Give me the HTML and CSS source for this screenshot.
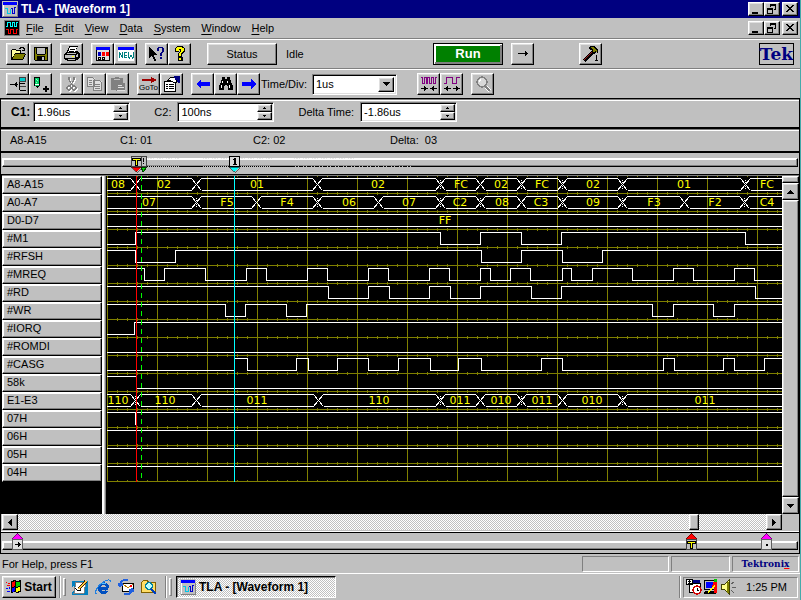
FILE: index.html
```
<!DOCTYPE html>
<html lang="en">
<head>
<meta charset="utf-8">
<title>TLA - [Waveform 1]</title>
<link rel="stylesheet" href="styles.css">
</head>
<body>
<svg class="defs" width="0" height="0" aria-hidden="true">
  <symbol id="app" viewBox="0 0 16 16"><path fill="#c0c0c0" d="M0 0h16v16H0z"/><path fill="#00f" d="M1 1h14v3H1z"/><path fill="#fff" d="M1 4h1v11H1z"/><path fill="#808080" d="M15 4h1v12H1v-1h14z"/><path fill="none" stroke="#00c8e8" stroke-width="1" d="M3 7.500h2.500v5h3v-5"/><path fill="none" stroke="#0000d0" d="M9 7.500h1.500v5h2v-6H14"/></symbol>
  <symbol id="min" viewBox="0 0 14 12"><path d="M3 9h6v2H3z"/></symbol>
  <symbol id="restore" viewBox="0 0 14 12"><path fill="none" stroke="#000" d="M5.500 4V1.500h5v5H9M5 2.500h6M2.500 5.500h5v5h-5zM2 6.500h6"/></symbol>
  <symbol id="close" viewBox="0 0 14 12"><path d="M3 2h2v1h1v1h2V3h1V2h2v1h-1v1H9v1H8v1h1v1h1v1h1v1H9V8H8V7H6v1H5v1H3V8h1V7h1V6h1V5H5V4H4V3H3z"/></symbol>
  <symbol id="tri-up" viewBox="0 0 7 4"><path d="M3 0h1v1h1v1h1v1h1v1H0V3h1V2h1V1h1z"/></symbol>
  <symbol id="tri-down" viewBox="0 0 7 4"><path d="M0 0h7v1H6v1H5v1H4v1H3V3H2V2H1V1H0z"/></symbol>
  <symbol id="tri-left" viewBox="0 0 4 7"><path d="M3 0h1v7H3V6H2V5H1V4H0V3h1V2h1V1h1z"/></symbol>
  <symbol id="tri-right" viewBox="0 0 4 7"><path d="M0 0h1v1h1v1h1v1h1v1H3v1H2v1H1v1H0z"/></symbol>
  <symbol id="spin-up" viewBox="0 0 3 2"><path d="M1 0h1v1h1v1H0V1h1z"/></symbol>
  <symbol id="spin-down" viewBox="0 0 3 2"><path d="M0 0h3v1H2v1H1V1H0z"/></symbol>
</svg>

<div class="screen">
<header class="titlebar">
  <svg class="i16"><use href="#app"/></svg>
  <h1>TLA - [Waveform 1]</h1>
  <div class="winbtns">
    <button class="bevel" aria-label="Minimize"><svg><use href="#min"/></svg></button>
    <button class="bevel" aria-label="Restore"><svg><use href="#restore"/></svg></button>
    <button class="bevel apart" aria-label="Close"><svg><use href="#close"/></svg></button>
  </div>
</header>

<nav class="menubar">
  <svg class="i16" viewBox="0 0 16 16"><path d="M0 0h16v16H0z"/><path fill="none" stroke="#808080" d="M.5.500h15v15H.5z"/><path fill="none" stroke="#0ff" d="M2 6.500h1.500v-4h3v4h2v-4h2v4h2v-4H14"/><path fill="none" stroke="#f00" d="M2 9.500h2.500v4h2v-4h3v4h3v-4H14"/></svg>
  <button><u>F</u>ile</button><button><u>E</u>dit</button><button><u>V</u>iew</button><button><u>D</u>ata</button><button><u>S</u>ystem</button><button><u>W</u>indow</button><button><u>H</u>elp</button>
  <div class="winbtns">
    <button class="bevel" aria-label="Minimize document"><svg><use href="#min"/></svg></button>
    <button class="bevel" aria-label="Restore document"><svg><use href="#restore"/></svg></button>
    <button class="bevel apart" aria-label="Close document"><svg><use href="#close"/></svg></button>
  </div>
</nav>

<div class="toolbar">
  <div class="group">
    <button class="tool bevel" aria-label="Open"><svg viewBox="0 0 16 16"><path d="M1 4h1V3h4v1h5v3h4v1h1v1h-1v2h-1v2h-1v1H1z"/><path fill="#ffffa0" d="M2 4h4v1h4v2H5v1H4v2H3v1H2z"/><path fill="#808000" d="M5 8h10v1h-1v2h-1v2H3v-2h1V9h1z"/><path fill="none" stroke="#000" d="M9 2.500h1v-1h3v1h1v2M12 4.500h3"/></svg></button>
    <button class="tool bevel" aria-label="Save"><svg viewBox="0 0 16 16"><path d="M1 1h14v14H2v-1H1z"/><path fill="#808000" d="M2 2h1v6h1v1h8V8h1V3h1v11H2z"/><path fill="#c0c0c0" d="M4 2h8v6H4z"/><path d="M4 10h8v4H4z"/><path fill="#c0c0c0" d="M9 11h2v3H9z"/></svg></button>
  </div>
  <div class="group">
    <button class="tool bevel" aria-label="Print"><svg viewBox="0 0 16 16"><path d="M5 0h9v1h-1v2h-1v2h2v1h1v1h1v5h-1v1h-1v1h-2v1H3v-1H1v-1H0V8h1V7h1V6h1V4h1V2h1z"/><path fill="#fff" d="M6 1h7l-2 5H4z"/><path fill="#c0c0c0" d="M3 7h9l-1 1H2zM1 9h10v3H1zM12 9h1v-1h1v3h-2zM4 13h7v1H4z"/><path d="M6 2.500h5v1H6zM5 4.500h5v1H5z"/><path fill="#ff0" d="M8 10h2v1H8z"/></svg></button>
  </div>
  <div class="group">
    <button class="tool bevel" aria-label="System window"><svg viewBox="0 0 16 16"><path d="M1 1h14v14H1z"/><path fill="#e0e0e0" d="M2 4h12v10H2z"/><path fill="#00f" d="M1 1h14v3H1z"/><path fill="#0000c0" d="M3 6h3v4H3z"/><path fill="#f00" d="M7 6h3v4H7zM11 6h3v4h-3z"/><path fill="none" stroke="#000" d="M3.500 11.500h2v2h-2zM7.500 11.500h2v2h-2z"/></svg></button>
    <button class="tool bevel" aria-label="New data window"><svg viewBox="0 0 16 16"><path fill="#fff" d="M0 1h16v14H0z"/><path fill="#00f" d="M0 1h16v3H0z"/><path fill="none" stroke="#008080" d="M1.500 12V6.500l3 5V6M9 6.500H6.500v5H9M6.500 9H9M10.500 6v5l1 1 1.500-3 1.500 3 1-1V6"/></svg></button>
  </div>
  <div class="group">
    <button class="tool bevel" aria-label="Context help"><svg viewBox="0 0 16 16"><path d="M0 1h1v1h1v1h1v1h1v1h1v1h1v1h1v1h1v1H5v2h1v2h1v2H5v-2H4v-2H3v-1H2v1H1v1H0z"/><path fill="#000080" d="M9 1h5v1h1v4h-1v1h-1v3h-2V7h1V6h1V2h-3v3H8V2h1zM11 11h2v2h-2z"/></svg></button>
    <button class="tool bevel" aria-label="Help topics"><svg viewBox="0 0 16 16"><path d="M5 0h6v1h1v1h1v4h-1v1h-1v1h-1v3H6V7h1V6h1V4H7v2H3V2h1V1h1zM6 11h5v4H6z"/><path fill="#ff0" d="M5 1h5v1h2v3h-1v1h-1v1H9v3H7V7h1V6h1V3H7v2H4V2h1zM7 12h2v2H7z"/></svg></button>
  </div>
  <button class="bevel status-btn">Status</button>
  <span class="idle">Idle</span>
  <button class="bevel run">Run</button>
  <button class="tool bevel step" aria-label="Single step"><svg viewBox="0 0 16 16"><path d="M3 7h7V5h1v1h1v1h1v1h-1v1h-1v1h-1V8H3z"/></svg></button>
  <button class="tool bevel hammer" aria-label="Tools"><svg viewBox="0 0 16 16"><path stroke="#000" stroke-width="3" d="M1 15l9-9"/><path stroke="#a02020" stroke-width="1.200" d="M1 14l8-8"/><path d="M5 2l2-2h5l3 4v3h-1l-1-1-1 2-2-1-1-3H8z"/><path fill="#808000" d="M7 1h4l3 4-1 1-1-1-1 2-1-1V3z"/><path d="M13 9h1v5h1v1h-3v-1h1v-4h-1z"/></svg></button>
  <span class="tek">Tek</span>
</div>

<div class="toolbar second">
  <div class="group">
    <button class="tool bevel" aria-label="Add channel"><svg viewBox="0 0 16 16"><path fill="none" stroke="#000" d="M0 8.500h8M6.500 6v5M5.500 7v3M9.500 3v11M10 7.500h5M10 14.500h6"/><path fill="#0cc" d="M10 2h6v3h-6z"/><path fill="none" stroke="#404040" d="M9.500 1.500h6v4h-6zM9.500 10.500h6"/></svg></button>
    <button class="tool bevel" aria-label="Add mark"><svg viewBox="0 0 16 16"><path d="M1 1h6v9H6v1H5v1H4v-1H3v-1H1z"/><path fill="#0c6" d="M2 2h4v8H2z"/><path fill="#80ffc0" d="M3 3h1v1H3zM4 4h1v1H4zM3 6h1v1H3z"/><path fill="#fff" d="M2 8h4v1H2z"/><path d="M12 10h2v2h2v2h-2v2h-2v-2h-2v-2h2z"/></svg></button>
  </div>
  <div class="group">
    <button class="tool bevel" aria-label="Cut" disabled><svg viewBox="0 0 16 16"><g fill="none" stroke="#fff" stroke-width="1.300" transform="translate(1 1)"><path d="M5 1v3l4 6M10 1v3l-4 6"/><circle cx="5" cy="12" r="2"/><circle cx="10" cy="12" r="2"/></g><g fill="none" stroke="#808080" stroke-width="1.300"><path d="M5 1v3l4 6M10 1v3l-4 6"/><circle cx="5" cy="12" r="2"/><circle cx="10" cy="12" r="2"/></g></svg></button>
    <button class="tool bevel" aria-label="Copy" disabled><svg viewBox="0 0 16 16"><path fill="#e0e0e0" d="M1 2h7v9H1zM7 5h8v10H7z"/><path fill="none" stroke="#808080" d="M.5 1.500h5l2 2v7h-7zM2 4.500h3M2 6.500h3M2 8.500h3M6.500 4.500h6l2 2v8h-8zM8 8.500h5M8 10.500h5M8 12.500h5"/></svg></button>
    <button class="tool bevel" aria-label="Paste" disabled><svg viewBox="0 0 16 16"><path fill="#808080" d="M1 2h4V1h4v1h4v5h2v8H6v-1H1z"/><path fill="#c0c0c0" d="M4 3h6v1H4z"/><path fill="#e0e0e0" d="M8 9h4v1H8zM8 11h6v1H8zM7 14h8v1H7z"/></svg></button>
  </div>
  <div class="group">
    <button class="tool bevel goto" aria-label="Go to"><svg viewBox="0 0 16 8"><path fill="#a00000" d="M1 3h9V1h1v1h2v1h2v2h-2v1h-2v1h-1V5H1z"/></svg><span>GoTo</span></button>
    <button class="tool bevel" aria-label="Properties"><svg viewBox="0 0 16 16"><path d="M0 5h12v11H0z"/><path fill="#fff" d="M1 6h10v9H1z"/><path fill="none" stroke="#000" d="M2 8.500h2M5 8.500h5M2 10.500h2M5 10.500h5M2 12.500h2M5 12.500h5"/><path fill="#fff" stroke="#000" d="M4 4l2-2 5-1 2 5-3 1-4-3z"/><path fill="#000080" d="M10 0h6v7h-2V6h-1V4h-2V2h-1z"/></svg></button>
  </div>
  <div class="group">
    <button class="tool bevel" aria-label="Search back"><svg viewBox="0 0 16 16"><path fill="#00f" d="M1 8l5-5v3h9v4H6v3z"/></svg></button>
    <button class="tool bevel" aria-label="Find"><svg viewBox="0 0 16 16"><path d="M4 1h3v2h2V1h3v3h1v3h1v2h1v5h-5v-4H9V9H7v1H6v4H1V9h1V7h1V4h1z"/><path fill="#fff" d="M4 5h1v2H4zM3 9h1v3H3zM9 5h1v2H9zM11 9h1v3h-1z"/></svg></button>
    <button class="tool bevel" aria-label="Search forward"><svg viewBox="0 0 16 16"><path fill="#00f" d="M15 8l-5-5v3H1v4h9v3z"/></svg></button>
  </div>
  <label class="timediv" for="timediv">Time/Div:</label>
  <span class="combo sunken"><select id="timediv"><option>1us</option></select><span class="drop bevel"><svg width="7" height="4"><use href="#tri-down"/></svg></span></span>
  <div class="group zoomers">
    <button class="tool bevel" aria-label="Zoom out"><svg viewBox="0 0 16 16"><path fill="none" stroke="#800080" d="M0 1.500h1.500v6h2v-6h2v6h1v-6h2v6h2v-6h2v6h2v-6H16"/><path d="M0 12h3v-2h1v1h1v1h2v1H5v1H4v1H3v-2H0zM16 12h-3v-2h-1v1h-1v1H9v1h2v1h1v1h1v-2h3z"/></svg></button>
    <button class="tool bevel" aria-label="Zoom in"><svg viewBox="0 0 16 16"><path fill="none" stroke="#800080" d="M0 7.500h2.500v-6h6v6h4v-6H16"/><path d="M7 12H4v-2H3v1H2v1H0v1h2v1h1v1h1v-2h3zM9 12h3v-2h1v1h1v1h2v1h-2v1h-1v1h-1v-2H9z"/></svg></button>
  </div>
  <button class="tool bevel" aria-label="Magnify" disabled><svg viewBox="0 0 16 16"><circle cx="7" cy="6" r="5" fill="#d8d8d8" stroke="#808080" stroke-width="1.500"/><path stroke="#fff" stroke-width="3" d="M11 11l4 4"/><path stroke="#808080" stroke-width="2" d="M10 10l5 5"/><path fill="none" stroke="#fff" d="M4 6l2-3"/></svg></button>
</div>

<main class="document">
  <form class="cursorbar">
    <label class="strong" for="c1">C1:</label>
    <span class="spin sunken"><input id="c1" value="1.96us"><span class="arrows"><button type="button" class="bevel" aria-label="C1 up"><svg><use href="#spin-up"/></svg></button><button type="button" class="bevel" aria-label="C1 down"><svg><use href="#spin-down"/></svg></button></span></span>
    <label for="c2">C2:</label>
    <span class="spin sunken"><input id="c2" value="100ns"><span class="arrows"><button type="button" class="bevel" aria-label="C2 up"><svg><use href="#spin-up"/></svg></button><button type="button" class="bevel" aria-label="C2 down"><svg><use href="#spin-down"/></svg></button></span></span>
    <label for="dt">Delta Time:</label>
    <span class="spin sunken"><input id="dt" value="-1.86us"><span class="arrows"><button type="button" class="bevel" aria-label="Delta up"><svg><use href="#spin-up"/></svg></button><button type="button" class="bevel" aria-label="Delta down"><svg><use href="#spin-down"/></svg></button></span></span>
  </form>
  <div class="readout"><span>A8-A15</span><span>C1: 01</span><span>C2: 02</span><span>Delta:&nbsp; 03</span></div>
  <div class="ruler">
    <div class="groove"></div>
    <svg class="marks" width="420" height="20"><path stroke="#e8e8e8" stroke-dasharray="1 1 2 1 1 3" d="M148 5.500h32M203 5.500h70M294 5.500h62"/><path stroke="#909090" d="M148 12.500h250"/><path stroke="#c0c0c0" stroke-dasharray="1 1" d="M148 13.500h32M203 13.500h68"/><path stroke="#c0c0c0" stroke-dasharray="1 2 1 4" d="M295 13.500h120"/>
      <path fill="#c0c0c0" stroke="#404040" d="M139.500 3.500h7v10h-7z"/><path fill="#00e000" stroke="#004000" d="M141 14h6l-4 5z"/><path d="M143 5h1v4h-1zM143 10h1v1h-1z"/>
      <path fill="#c0c0c0" stroke="#404040" d="M131.500 3.500h10v10h-10z"/><path fill="none" stroke="#000" stroke-width="3" d="M132 6.500h9M136.500 6v7"/><path fill="none" stroke="#ff0" d="M133 6.500h7M136.500 6v6"/><path fill="#f00" stroke="#000" stroke-width=".5" d="M131 14h11l-5.500 5z"/>
      <path fill="#d8d8d8" stroke="#000" d="M229.500 3.500h10v10h-10z"/><path d="M234 5h2v6h1v1h-4v-1h1V7h-1V6h1z"/><path fill="#0ff" stroke="#000" stroke-width=".5" d="M229 14h11l-5.500 5z"/></svg>
  </div>
  <div class="view">
    <ul class="signals" id="signals"></ul>
    <div class="splitter"></div>
    <div class="plot"><svg id="plot" width="100%" height="306" role="img" aria-label="Waveforms"></svg></div>
    <div class="vscroll">
      <span class="bevel splitbox"></span>
      <button class="bevel" aria-label="Scroll up"><svg width="7" height="4"><use href="#tri-up"/></svg></button>
      <span class="bevel thumb"></span>
      <button class="bevel" aria-label="Scroll down"><svg width="7" height="4"><use href="#tri-down"/></svg></button>
    </div>
  </div>
  <div class="hscroll">
    <button class="bevel" aria-label="Scroll left"><svg width="4" height="7"><use href="#tri-left"/></svg></button>
    <span class="track before"></span><span class="bevel thumb"></span><span class="track after"></span>
    <button class="bevel" aria-label="Scroll right"><svg width="4" height="7"><use href="#tri-right"/></svg></button>
    <span class="corner"></span>
  </div>
  <div class="overview">
    <div class="groove"></div>
    <svg class="pin start" viewBox="0 0 12 18"><path fill="#f0f" stroke="#000" stroke-width=".5" d="M0 6h11L5.500 0z"/><path fill="#e0e0e0" stroke="#606060" d="M.5 6.500h10v10H.5z"/><path d="M3 11h3V9h1v1h1v1h1v1H8v1H7v1H6v-2H3z"/></svg>
    <svg class="pin trigger" viewBox="0 0 12 18"><path fill="#f00" stroke="#000" stroke-width=".5" d="M0 6h11L5.500 0z"/><path fill="#c0c0c0" stroke="#404040" d="M.5 6.500h10v10H.5z"/><path fill="none" stroke="#000" stroke-width="3" d="M1 9.500h9M5.500 9v7"/><path fill="none" stroke="#ff0" d="M2 9.500h7M5.500 9v6"/></svg>
    <svg class="pin end" viewBox="0 0 12 18"><path fill="#f0f" stroke="#000" stroke-width=".5" d="M0 6h11L5.500 0z"/><path fill="#e0e0e0" stroke="#606060" d="M.5 6.500h10v10H.5z"/><path d="M5 11h2v2H5z"/></svg>
  </div>
</main>

<footer class="statusbar"><span class="msg">For Help, press F1</span><span class="pane wide"></span><span class="pane"></span><span class="pane brand">Tektroni<i>x</i></span></footer>

<div class="taskbar">
  <button class="bevel start-btn"><svg class="i16" viewBox="0 0 16 16"><path d="M5 2l3-1 3 1 4-1v12l-4 1-3-1-3 1z"/><path fill="#f00" d="M6 3l3-1v5L6 8zM0 3h1v1H0zM2 4h2v1H2zM1 6h3v1H1z"/><path fill="#0c0" d="M10 3h4v4l-4 1z"/><path fill="#00f" d="M6 9l3-1v4l-3 1zM0 9h2v1H0zM3 8h1v2H3zM1 12h3v1H1z"/><path fill="#ff0" d="M10 9l4-1v4l-4 1z"/></svg>Start</button>
  <span class="sep"></span><span class="grip"></span>
  <div class="quick">
    <button aria-label="Show desktop"><svg class="i16" viewBox="0 0 16 16"><path fill="#0080c0" d="M0 2h16v14H0z"/><path fill="#fff" stroke="#808080" d="M4 3h10l-2 11H2z"/><path fill="none" stroke="#000" d="M3 9l3 3 3-1"/><path stroke="#402000" stroke-width="3" d="M7 10l7-8"/><path stroke="#fc4" stroke-width="1.500" d="M7 10l7-8"/><path fill="#c0c0c0" d="M6 0h4v2H6zM0 8l2-2v5l-2 2z"/></svg></button>
    <button aria-label="Internet Explorer"><svg class="i16" viewBox="0 0 16 16"><path fill="none" stroke="#0050c0" stroke-width="3" d="M13 9H4.500M13 9a4.500 4.500 0 1 0-1 3"/><path fill="none" stroke="#50c0ff" d="M4 7a4.500 4.500 0 0 1 7-2"/><path fill="none" stroke="#2080e0" d="M2 14C-1 17 0 9 7 4s9-3 8-1"/></svg></button>
    <button aria-label="Outlook Express"><svg class="i16" viewBox="0 0 16 16"><path fill="#fff" stroke="#000" d="M4.500 4.500h11v8h-11z"/><path fill="none" stroke="#c08000" d="M5 5l5 4 5-4"/><path fill="none" stroke="#2060e0" stroke-width="2" d="M10 1C5 0 3 2 2 6M0 4l2 3 3-2M6 15c5 1 7-1 8-4M16 13l-2-3-3 2"/><path fill="#f00" d="M12 6h2v2h-2z"/></svg></button>
    <button aria-label="Explorer search"><svg class="i16" viewBox="0 0 16 16"><path fill="#fd6" stroke="#806000" d="M.5 3.500l2-2h4l1 2h7v10H.5z"/><circle cx="8" cy="7" r="3.500" fill="#bff" stroke="#0080a0" stroke-width="1.500"/><path stroke="#0040c0" stroke-width="2" d="M10 10l5 5"/></svg></button>
  </div>
  <span class="sep"></span><span class="grip"></span>
  <button class="task"><svg class="i16"><use href="#app"/></svg>TLA - [Waveform 1]</button>
  <span class="sep trailing"></span>
  <div class="tray">
    <svg class="i16" viewBox="0 0 16 16"><path fill="#fff" stroke="#000" d="M.5.500h6v5h-6zM3.500 4.500h11v9h-11z"/><path fill="#000080" d="M7 1h7v3H7z"/><path d="M2 2h1v1H2zM4 2h1v1H4zM2 4h1v1H2zM3 0h1v6H3z"/><circle cx="11" cy="11" r="4" fill="#fff" stroke="#d00000" stroke-width="1.500"/><path fill="none" stroke="#000" d="M11 8.500v3h2"/></svg>
    <svg class="i16" viewBox="0 0 16 16"><path d="M1 1h13v10H1zM3 12h10v3H1v-2z"/><path fill="#c0c0c0" d="M2 2h11v8H2z"/><path fill="#00f" d="M3 3h9v6H3z"/><path fill="#f00" d="M10 3h4v11h-3V9H9z"/><path fill="#ff0" d="M4 13l7-7 1 1-6 7z"/><path fill="#0c0" d="M11 0h3v3h-3z"/></svg>
    <svg class="i16" viewBox="0 0 16 16"><path fill="#ff8" stroke="#404000" d="M1.500 5.500h3l5-5v15l-5-5h-3z"/><path fill="#808000" d="M7 3h2v11H7z"/><path fill="none" stroke="#606060" d="M11 5l3-2M12 8.500h4M11 11l3 3"/></svg>
    <time>1:25 PM</time>
  </div>
</div>
</div>
<script src="waves.js"></script>
</body>
</html>
```
FILE: styles.css
```
* { box-sizing: border-box; }
body {
  margin: 0;
  background: #4aa;
  color: #000;
  font: 11px/14px "Liberation Sans", Arial, sans-serif;
}
button, input, select { font: inherit; color: inherit; border-radius: 0; }
button { margin: 0; padding: 0; border: 0; background: none; }
svg { display: block; shape-rendering: crispEdges; }
.defs { position: absolute; }
.i16 { width: 16px; height: 16px; flex: none; }

.screen {
  display: flex;
  flex-direction: column;
  min-height: 100vh;
  margin-right: 1px;
  background: #c0c0c0;
}
.bevel {
  display: flex;
  align-items: center;
  justify-content: center;
  flex: none;
  background: #c0c0c0;
  border: 1px solid;
  border-color: #fff #000 #000 #fff;
  box-shadow: inset -1px -1px #808080, inset 1px 1px #dfdfdf;
}
.sunken {
  display: flex;
  background: #fff;
  border: 1px solid;
  border-color: #808080 #fff #fff #808080;
  box-shadow: inset 1px 1px #000, inset -1px -1px #dfdfdf;
}

/* Title and menu */
.titlebar {
  display: flex;
  align-items: center;
  height: 18px;
  padding: 0 0 0 2px;
  background: #000080;
  color: #fff;
}
.titlebar h1 { margin: 0 0 0 3px; font-size: 12px; line-height: 16px; }
.winbtns { display: flex; margin-left: auto; padding-right: 2px; }
.winbtns .bevel { width: 16px; height: 14px; }
.winbtns .apart { margin-left: 2px; }
.winbtns svg { width: 14px; height: 12px; }
.menubar {
  display: flex;
  align-items: center;
  height: 21px;
  padding-left: 4px;
  border-bottom: 1px solid #808080;
}
.menubar > button { margin-left: 11px; }
.menubar > button:nth-of-type(1) { margin-left: 6px; }
.menubar u { text-underline-offset: 2px; }

/* Toolbars */
.toolbar {
  display: flex;
  align-items: center;
  height: 30px;
  padding-left: 6px;
  border-top: 1px solid #fff;
  border-bottom: 1px solid #808080;
}
.second { height: 29px; border-bottom: 0; }
.group { display: flex; margin-right: 8px; }
.tool { width: 23px; height: 22px; }
.tool svg { width: 16px; height: 16px; }
.status-btn { width: 70px; height: 22px; margin-left: 8px; }
.idle { width: 156px; padding-left: 9px; }
.run {
  width: 70px;
  height: 22px;
  border-color: #000;
  background: #008000;
  color: #fff;
  font: bold 13px/16px "Liberation Sans", Arial, sans-serif;
  box-shadow: inset 1px 1px #fff, inset -2px -2px #808080, inset 2px 2px #fff;
}
.step { margin-left: 8px; }
.hammer { margin-left: 45px; }
.tek {
  margin: 0 6px 0 auto;
  border: 1px solid #000;
  color: #000080;
  font: bold 17px/20px "DejaVu Serif", serif;
}
.goto { flex-direction: column; }
.goto svg { width: 16px; height: 8px; }
.goto span { font-size: 8px; line-height: 8px; }
.timediv { margin-left: -7px; width: 51px; }
.combo { width: 85px; height: 21px; margin-right: 20px; padding: 2px; }
.combo select {
  flex: 1;
  min-width: 0;
  padding: 0 0 0 1px;
  border: 0;
  appearance: none;
  background: #fff;
}
.drop { width: 16px; }

/* Document window */
.document {
  display: flex;
  flex-direction: column;
  flex: 1;
  border: 1px solid #000;
}
.cursorbar {
  display: flex;
  align-items: center;
  height: 30px;
  padding: 0 10px 4px;
  border-top: 1px solid #808080;
  border-bottom: 2px solid #000;
  box-shadow: inset 0 1px #fff;
}
.cursorbar label { margin-right: 6px; }
.cursorbar .strong { margin-right: 3px; font-size: 12px; font-weight: bold; }
.spin { width: 97px; height: 20px; margin-right: 24px; padding: 1px; }
.spin input {
  flex: 1;
  min-width: 0;
  padding: 0 0 0 2px;
  border: 0;
  background: none;
}
.arrows { display: flex; flex-direction: column; width: 15px; }
.arrows .bevel { flex: 1; }
.arrows svg { width: 3px; height: 2px; }
.readout {
  display: grid;
  grid-template-columns: 110px 133px 137px 1fr;
  height: 24px;
  padding: 4px 9px;
  border-bottom: 2px solid #000;
  box-shadow: inset 0 1px #808080, inset 0 2px #fff;
}
.ruler { position: relative; height: 21px; padding: 5px 1px 0; }
.groove {
  height: 9px;
  border: 1px solid;
  border-color: #fff #000 #000 #fff;
  box-shadow: inset -1px -1px #808080, inset 1px 1px #fff;
}
.marks { position: absolute; left: -1px; top: 0; }

.view {
  display: flex;
  flex: 1;
  padding-top: 1px;
  border-left: 1px solid #000;
  border-top: 1px solid #000;
  background: #000;
  box-shadow: inset 0 1px #808080;
}
.signals { flex: none; width: 100px; margin: 0; padding: 0; list-style: none; }
.signals li {
  height: 18px;
  padding-left: 4px;
  background: #c0c0c0;
  border: solid;
  border-width: 1px;
  border-color: #fff #000 #000 #fff;
  box-shadow: inset -1px -1px #808080, inset 1px 1px #fff;
}
.splitter {
  flex: none;
  width: 4px;
  margin-right: 1px;
  background: linear-gradient(90deg, #fff 2px, #c0c0c0 2px, #c0c0c0 3px, #808080 3px);
}
.plot { flex: 1; min-width: 0; overflow: hidden; }
.plot text {
  fill: #ff0;
  text-anchor: middle;
  font: 11px/14px "DejaVu Sans", Verdana, sans-serif;
}
.grid { fill: none; stroke: #808000; }
.trace { fill: none; stroke: #fff; }
.vscroll { display: flex; flex-direction: column; width: 17px; flex: none; background: #c0c0c0; }
.vscroll .splitbox { height: 7px; }
.vscroll button { height: 17px; }
.vscroll .thumb { flex: 1; }

.hscroll { display: flex; height: 18px; padding: 0 0 1px 1px; border-bottom: 1px solid #fff; }
.hscroll button { width: 16px; }
.hscroll .thumb { width: 10px; }
.hscroll .corner { width: 17px; }
.track { background: repeating-conic-gradient(#fff 0 25%, #c0c0c0 0 50%) 0 0 / 2px 2px; }
.before { flex: 673; }
.after { flex: 67; }
.overview { position: relative; height: 21px; padding: 8px 1px 0; border-top: 1px solid #000; }
.pin { position: absolute; top: 0; width: 12px; height: 18px; }
.pin.start { left: 11px; }
.pin.trigger { right: 101px; }
.pin.end { right: 26px; }

/* Status line */
.statusbar { display: flex; gap: 2px; height: 19px; padding: 2px 1px 1px 2px; }
.msg { flex: 1; line-height: 16px; }
.pane { width: 59px; border: 1px solid; border-color: #808080 #fff #fff #808080; }
.pane.wide { width: 87px; }
.brand {
  width: 67px;
  color: #000080;
  text-align: center;
  font: bold 9px/14px "DejaVu Serif", serif;
}
.brand i { font-style: normal; text-decoration: underline #f00; }

/* Taskbar */
.taskbar {
  display: flex;
  align-items: center;
  height: 27px;
  padding: 0 2px;
  border-top: 1px solid #fff;
}
.start-btn { width: 54px; height: 22px; gap: 2px; font-size: 12px; font-weight: bold; }
.sep { width: 2px; height: 22px; margin: 0 2px 0 3px; border-left: 1px solid #808080; border-right: 1px solid #fff; }
.grip { width: 3px; height: 18px; border: 1px solid; border-color: #fff #808080 #808080 #fff; }
.quick { display: flex; gap: 7px; padding: 0 5px 0 6px; }
.task {
  display: flex;
  align-items: center;
  gap: 3px;
  width: 160px;
  height: 22px;
  margin-left: 4px;
  padding-left: 3px;
  border: 1px solid;
  border-color: #000 #fff #fff #000;
  background: repeating-conic-gradient(#fff 0 25%, #c0c0c0 0 50%) 0 0 / 2px 2px;
  box-shadow: inset 1px 1px #808080;
  font-size: 12px;
  font-weight: bold;
}
.trailing { margin-left: auto; }
.tray {
  display: flex;
  align-items: center;
  gap: 1px;
  width: 115px;
  height: 21px;
  padding-left: 2px;
  border: 1px solid;
  border-color: #808080 #fff #fff #808080;
}
.tray time { margin-left: auto; padding-right: 10px; }
```
FILE: waves.js
```
// Trace geometry: x runs from the left edge of the plot, one row every 18px.
const ROW = 18, HIGH = 2, LOW = 14, WIDTH = 2000, ORIGIN = 107;

// Digital traces: start level and the positions where the level toggles.
// Buses: crossings ("*" marks a glitch) and labelled values.
const signals = [
  { name: 'A8-A15', cross: ['135', '196', '317', '440*', '480', '521*', '562*', '622*', '745*'],
    values: [['08', 118], ['02', 164], ['01', 257], ['02', 378], ['FC', 461], ['02', 501], ['FC', 542], ['02', 593], ['01', 684], ['FC', 767]] },
  { name: 'A0-A7', cross: ['196*', '256', '317*', '378', '440*', '480*', '521', '562*', '622*', '684', '744*'],
    values: [['07', 149], ['F5', 227], ['F4', 287], ['06', 349], ['07', 409], ['C2', 460], ['08', 502], ['C3', 541], ['09', 593], ['F3', 654], ['F2', 715], ['C4', 767]] },
  { name: 'D0-D7', cross: [], values: [['FF', 445]] },
  { name: '#M1', level: 0, at: [135, 440, 480, 521, 561, 745] },
  { name: '#RFSH', level: 1, at: [135, 175, 481, 521, 562, 602] },
  { name: '#MREQ', level: 1, at: [144, 164, 205, 246, 266, 307, 327, 368, 388, 429, 449, 480, 490, 510, 530, 562, 571, 592, 632, 673, 693, 734, 754] },
  { name: '#RD', level: 1, at: [328, 368, 389, 429, 450, 480, 531, 561, 755] },
  { name: '#WR', level: 1, at: [225, 245, 286, 306, 652, 673, 713, 734] },
  { name: '#IORQ', level: 0, at: [134] },
  { name: '#ROMDI', level: 0, at: [] },
  { name: '#CASG', level: 0, at: [234, 247, 296, 308, 337, 368, 398, 430, 458, 481, 541, 562, 663, 674, 723, 734, 764] },
  { name: '58k', level: 1, at: [136] },
  { name: 'E1-E3', cross: ['135*', '196', '318', '440*', '480', '521*', '562', '622*'],
    values: [['110', 118], ['110', 165], ['011', 257], ['110', 379], ['011', 460], ['010', 501], ['011', 542], ['010', 592], ['011', 705]] },
  { name: '07H', level: 1, at: [135, 135] },
  { name: '06H', level: 1, at: [] },
  { name: '05H', level: 1, at: [] },
  { name: '04H', level: 1, at: [] }
];

const path = (cls, d) => `<path class="${cls}" d="${d}"/>`;
let out = '', grid = '';
const bottom = signals.length * ROW;

for (let x = 0; x < WIDTH; x += 50) grid += `M${x + .5} 0V${bottom}`;
for (let r = 0; r <= signals.length; r++) {
  const y = r * ROW - .5;
  if (r) grid += `M0 ${y}H${WIDTH}`;
  for (let x = 0; x < WIDTH; x += 10) grid += `M${x + .5} ${y - 1.5}v3`;
}
out += path('grid', grid);

signals.forEach((s, r) => {
  const top = r * ROW + HIGH + .5, low = r * ROW + LOW + .5;
  let d = '';
  if (s.cross) {
    let x = 0;
    for (const c of s.cross) {
      const m = parseInt(c) - ORIGIN + .5;
      d += `M${x} ${top}H${m - 5}L${m + 5} ${low}M${x} ${low}H${m - 5}L${m + 5} ${top}`;
      if (c.endsWith('*')) for (let y = top + 2; y < low; y += 2) d += `M${m - .5} ${y}h1`;
      x = m + 5;
    }
    d += `M${x} ${top}H${WIDTH}M${x} ${low}H${WIDTH}`;
    out += path('trace', d);
    for (const [t, x] of s.values) out += `<text x="${x - ORIGIN}" y="${low - 2.5}">${t}</text>`;
  } else {
    let level = s.level;
    d = `M0 ${level ? top : low}`;
    for (const a of s.at) { level = 1 - level; d += `H${a - ORIGIN + .5}V${level ? top : low}`; }
    out += path('trace', d + `H${WIDTH}`);
  }
});

const cursor = (x, color, dash) => `<path stroke="${color}" stroke-dasharray="${dash}" d="M${x - ORIGIN + .5} 0V${bottom}"/>`;
out += cursor(136, '#f00', 'none') + cursor(141, '#0f0', '5 4') + cursor(234, '#0ff', 'none');

document.getElementById('plot').innerHTML = out;
document.getElementById('signals').innerHTML = signals.map(s => `<li>${s.name}</li>`).join('');
```
